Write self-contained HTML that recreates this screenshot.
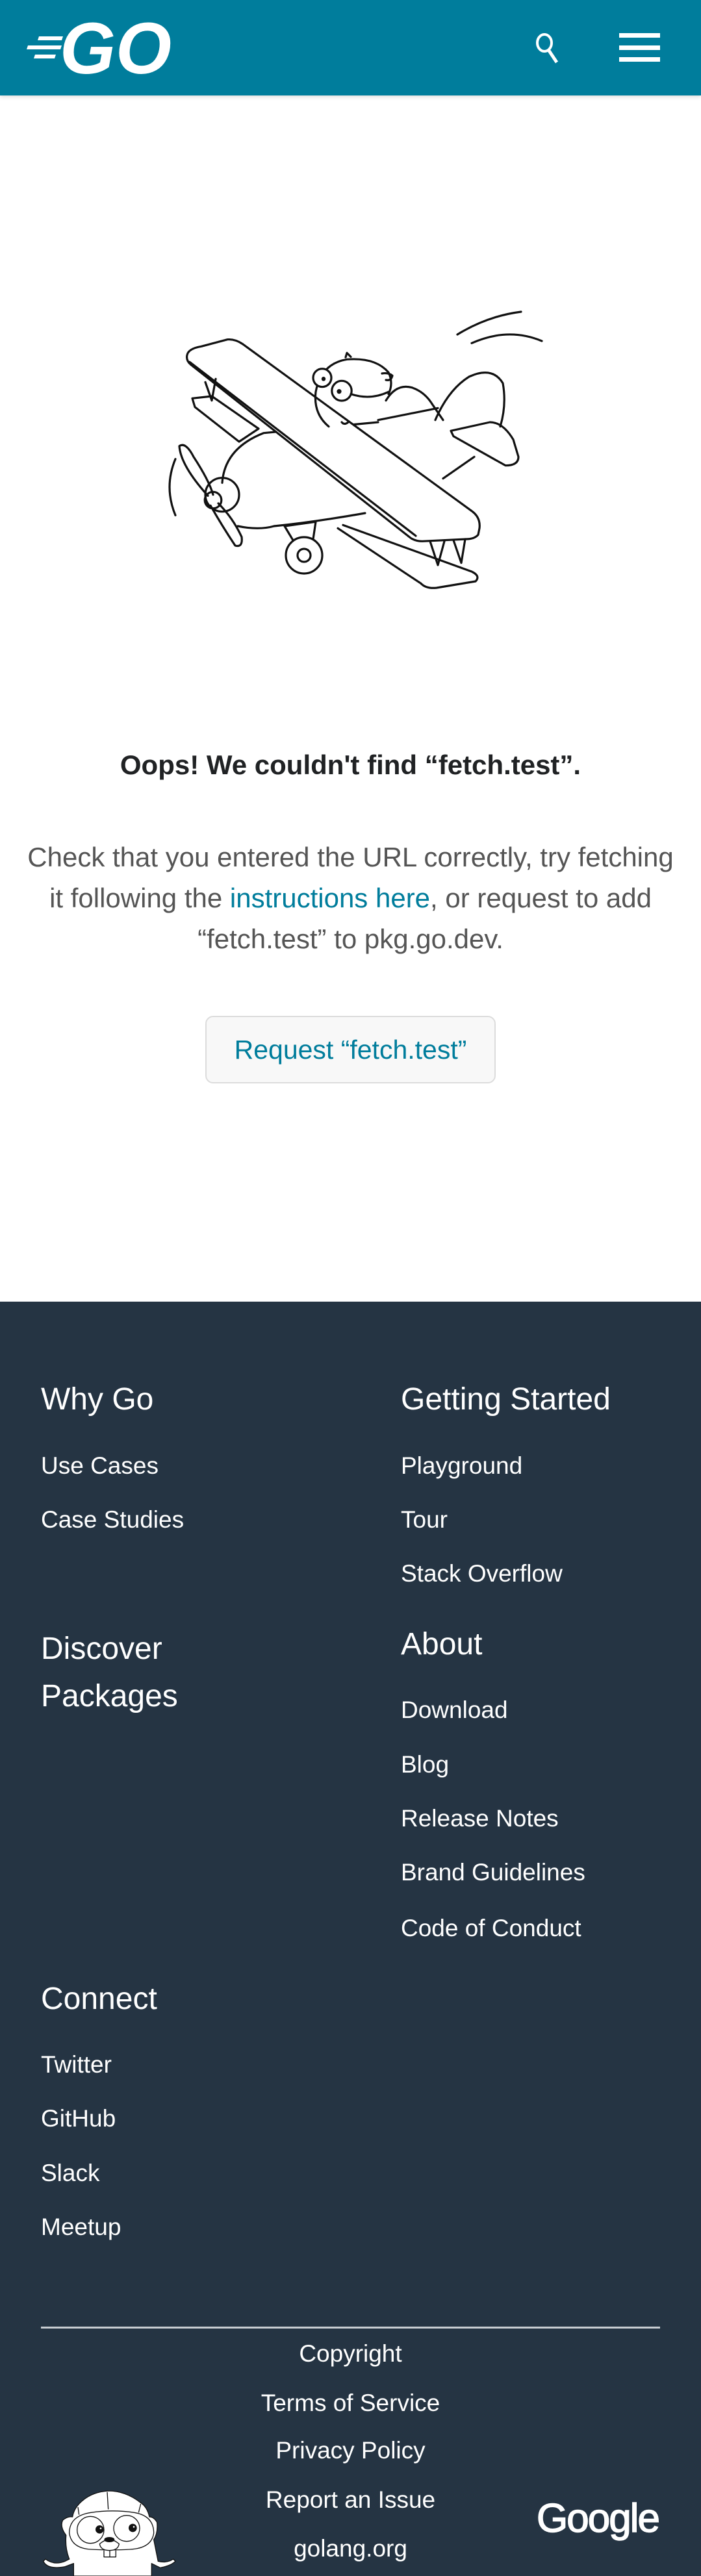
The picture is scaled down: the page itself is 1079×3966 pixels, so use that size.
<!DOCTYPE html>
<html><head><meta charset="utf-8"><style>
*{margin:0;padding:0;box-sizing:border-box}
body{width:1079px;height:3966px;position:relative;background:#fff;font-family:"Liberation Sans",Arial,sans-serif;overflow:hidden}
.a{position:absolute;white-space:nowrap}
header{position:absolute;left:0;top:0;width:1079px;height:147px;background:#007d9c;box-shadow:0 2px 6px rgba(0,0,0,.15)}
footer{position:absolute;left:0;top:2004px;width:1079px;height:1962px;background:#253443;color:#fff}
.h{font-size:48px;line-height:60px;color:#fff}
.l{font-size:37px;line-height:50px;color:#fff}
.c{left:0;width:1079px;text-align:center}
</style></head><body>
<header>
<svg class="a" style="left:40px;top:30px" width="230" height="90" viewBox="0 0 230 90">
<g fill="#fff"><polygon points="20,26 57,26 55,32 18,32"/><polygon points="3,40 55,40 53,46 1,46"/><polygon points="14,54 46,54 44,60 12,60"/></g>
<text x="52" y="83" font-family="Liberation Sans" font-weight="bold" font-style="italic" font-size="112" fill="#fff" textLength="172" lengthAdjust="spacingAndGlyphs">GO</text>
</svg>
<svg class="a" style="left:818px;top:48px" width="52" height="52" viewBox="0 0 52 52"><ellipse cx="20" cy="18" rx="11" ry="13" fill="none" stroke="#fff" stroke-width="4"/><path d="M27,30 L39,48" stroke="#fff" stroke-width="5"/></svg>
<div class="a" style="left:953px;top:51px;width:63px;height:7px;background:#fff"></div>
<div class="a" style="left:953px;top:70px;width:63px;height:7px;background:#fff"></div>
<div class="a" style="left:953px;top:88px;width:63px;height:7px;background:#fff"></div>
</header>

<svg class="a" style="left:230px;top:450px" width="620" height="480" viewBox="0 0 1550 1440" preserveAspectRatio="none" fill="none" stroke="#111" stroke-width="3.2" stroke-linejoin="round" stroke-linecap="round">
<g>
<path vector-effect="non-scaling-stroke" d="M1185,195 Q1300,110 1430,90"/><path vector-effect="non-scaling-stroke" d="M1240,235 Q1380,160 1510,225"/>
<path vector-effect="non-scaling-stroke" d="M100,1030 Q55,900 100,770"/>
<path vector-effect="non-scaling-stroke" d="M165,490 L240,480 L420,630 L345,690 L175,530 Z"/>
<path vector-effect="non-scaling-stroke" d="M745,1075 L1240,1290 Q1275,1310 1255,1335 L1105,1365 Q1065,1370 1045,1345 L725,1090"/>
<path vector-effect="non-scaling-stroke" d="M280,880 Q290,720 440,650 L880,600"/>
<path vector-effect="non-scaling-stroke" d="M880,590 L1110,535"/>
<path vector-effect="non-scaling-stroke" d="M1100,590 Q1150,450 1230,390 Q1320,340 1360,420 Q1375,520 1350,620"/>
<path vector-effect="non-scaling-stroke" d="M1160,640 L1310,600 Q1360,600 1400,680 L1420,760 Q1420,800 1370,800 L1170,665 Z"/>
<path vector-effect="non-scaling-stroke" d="M1250,760 L1130,860"/>
<path vector-effect="non-scaling-stroke" d="M480,1080 Q640,1060 830,1020"/>
<path vector-effect="non-scaling-stroke" d="M340,1080 Q420,1100 480,1080"/>
<ellipse vector-effect="non-scaling-stroke" cx="280" cy="935" rx="65" ry="78"/><ellipse vector-effect="non-scaling-stroke" cx="245" cy="960" rx="32" ry="38"/>
<path vector-effect="non-scaling-stroke" d="M225,940 Q120,800 115,710 Q140,690 170,760 Q230,870 245,935"/>
<path vector-effect="non-scaling-stroke" d="M235,985 Q280,1080 330,1170 Q360,1180 355,1130 Q320,1040 265,975"/>
<path vector-effect="non-scaling-stroke" d="M520,1080 L640,1060 L630,1140 L560,1160 Z"/>
<ellipse vector-effect="non-scaling-stroke" cx="595" cy="1215" rx="70" ry="84" fill="#fff"/><ellipse vector-effect="non-scaling-stroke" cx="595" cy="1215" rx="25" ry="30"/>
<path vector-effect="non-scaling-stroke" d="M145,290 Q150,260 200,250 L300,218 Q330,215 360,240 L1240,1010 Q1275,1040 1270,1090 L1265,1120 Q1250,1140 1220,1140 L1050,1150 Q1020,1150 1000,1130 L160,335 Q140,315 145,290 Z" fill="#fff"/>
<path vector-effect="non-scaling-stroke" d="M155,322 L1025,1125"/>
<path vector-effect="non-scaling-stroke" d="M215,415 L240,500 L255,400"/><path vector-effect="non-scaling-stroke" d="M1080,1150 L1110,1260 L1135,1150"/><path vector-effect="non-scaling-stroke" d="M1170,1145 L1200,1250 L1215,1140"/>
<path vector-effect="non-scaling-stroke" d="M690,620 Q630,560 640,460 Q660,330 760,310 Q870,300 920,370 Q940,420 920,470"/>
<path vector-effect="non-scaling-stroke" d="M755,300 L760,280 L775,298"/>
<path vector-effect="non-scaling-stroke" d="M895,375 Q920,370 935,385 Q930,410 910,405"/>
<ellipse vector-effect="non-scaling-stroke" cx="665" cy="395" rx="35" ry="42" fill="#fff"/><ellipse vector-effect="non-scaling-stroke" cx="740" cy="455" rx="38" ry="46" fill="#fff"/>
<ellipse cx="670" cy="400" rx="8" ry="10" fill="#111" stroke="none"/><ellipse cx="730" cy="458" rx="9" ry="11" fill="#111" stroke="none"/>
<path vector-effect="non-scaling-stroke" d="M775,470 Q850,500 920,460"/>
<path vector-effect="non-scaling-stroke" d="M910,500 Q950,420 1010,440 Q1060,460 1090,520 L1130,590"/>
<path vector-effect="non-scaling-stroke" d="M740,600 Q750,615 765,600"/>
</g>
</svg>

<div class="a c" style="top:1153px;font-size:42px;line-height:50px;font-weight:bold;color:#202224">Oops! We couldn't find “fetch.test”.</div>
<div class="a c" style="top:1288px;font-size:42px;line-height:63px;color:#555;white-space:normal;padding:0 30px">Check that you entered the URL correctly, try fetching it following the <span style="color:#007d9c">instructions here</span>, or request to add “fetch.test” to pkg.go.dev.</div>
<div class="a" style="left:316px;top:1564px;width:447px;height:104px;background:#f8f8f8;border:2px solid #dcdcdc;border-radius:12px;text-align:center;line-height:100px;font-size:41px;color:#007d9c">Request “fetch.test”</div>

<footer>
<div class="a h" style="left:63px;top:121px">Why Go</div>
<div class="a h" style="left:617px;top:121px">Getting Started</div>
<div class="a l" style="left:63px;top:228px">Use Cases</div>
<div class="a l" style="left:63px;top:311px">Case Studies</div>
<div class="a l" style="left:617px;top:228px">Playground</div>
<div class="a l" style="left:617px;top:311px">Tour</div>
<div class="a l" style="left:617px;top:394px">Stack Overflow</div>
<div class="a h" style="left:63px;top:498px;line-height:73px;white-space:normal;width:300px">Discover Packages</div>
<div class="a h" style="left:617px;top:498px">About</div>
<div class="a l" style="left:617px;top:604px">Download</div>
<div class="a l" style="left:617px;top:688px">Blog</div>
<div class="a l" style="left:617px;top:771px">Release Notes</div>
<div class="a l" style="left:617px;top:854px">Brand Guidelines</div>
<div class="a l" style="left:617px;top:940px">Code of Conduct</div>
<div class="a h" style="left:63px;top:1044px">Connect</div>
<div class="a l" style="left:63px;top:1150px">Twitter</div>
<div class="a l" style="left:63px;top:1233px">GitHub</div>
<div class="a l" style="left:63px;top:1317px">Slack</div>
<div class="a l" style="left:63px;top:1400px">Meetup</div>
<div class="a" style="left:63px;top:1578px;width:953px;height:3px;background:#c8cdd2"></div>
<div class="a l c" style="top:1595px">Copyright</div>
<div class="a l c" style="top:1671px">Terms of Service</div>
<div class="a l c" style="top:1744px">Privacy Policy</div>
<div class="a l c" style="top:1820px">Report an Issue</div>
<div class="a l c" style="top:1895px">golang.org</div>
<div class="a" style="left:826px;top:1834px;font-size:62px;line-height:80px;color:#fff;letter-spacing:-2px;-webkit-text-stroke:1.5px #fff">Google</div>
</footer>

<svg class="a" style="left:40px;top:3800px" width="260" height="166" viewBox="0 0 780 498" stroke="#111" stroke-width="4" stroke-linejoin="round">
<path d="M80,430 Q100,470 180,455 L220,440 L220,498 L580,498 L580,440 L620,460 Q670,450 690,430 L680,420 Q650,440 610,430 Q600,380 590,330 Q610,300 605,250 Q590,225 570,225 Q560,180 530,160 Q460,105 380,105 Q300,110 250,160 Q220,190 215,225 Q195,220 170,240 Q155,270 185,310 Q180,370 200,420 L180,430 Q130,450 90,420 Z" fill="#fff"/>
<path d="M375,110 L380,190 M240,180 L245,215 M530,165 L520,205" fill="none"/>
<path d="M200,300 Q200,220 300,205 Q400,190 500,205 Q590,220 590,300 Q580,370 480,375 Q400,380 300,375 Q210,370 200,300 Z" fill="#fff"/>
<circle cx="298" cy="285" r="62" fill="#fff"/><circle cx="465" cy="278" r="60" fill="#fff"/>
<circle cx="340" cy="283" r="17" fill="#111"/><circle cx="345" cy="278" r="4" fill="#fff" stroke="none"/>
<circle cx="493" cy="276" r="17" fill="#111"/><circle cx="498" cy="271" r="4" fill="#fff" stroke="none"/>
<path d="M360,380 L360,410 L415,410 L415,380" fill="#fff"/><path d="M387,380 L387,410" fill="none"/>
<path d="M340,350 Q385,310 430,350 Q425,380 385,380 Q345,380 340,350 Z" fill="#fff"/>
<ellipse cx="385" cy="330" rx="22" ry="10" fill="#111"/>
</svg>
</body></html>
